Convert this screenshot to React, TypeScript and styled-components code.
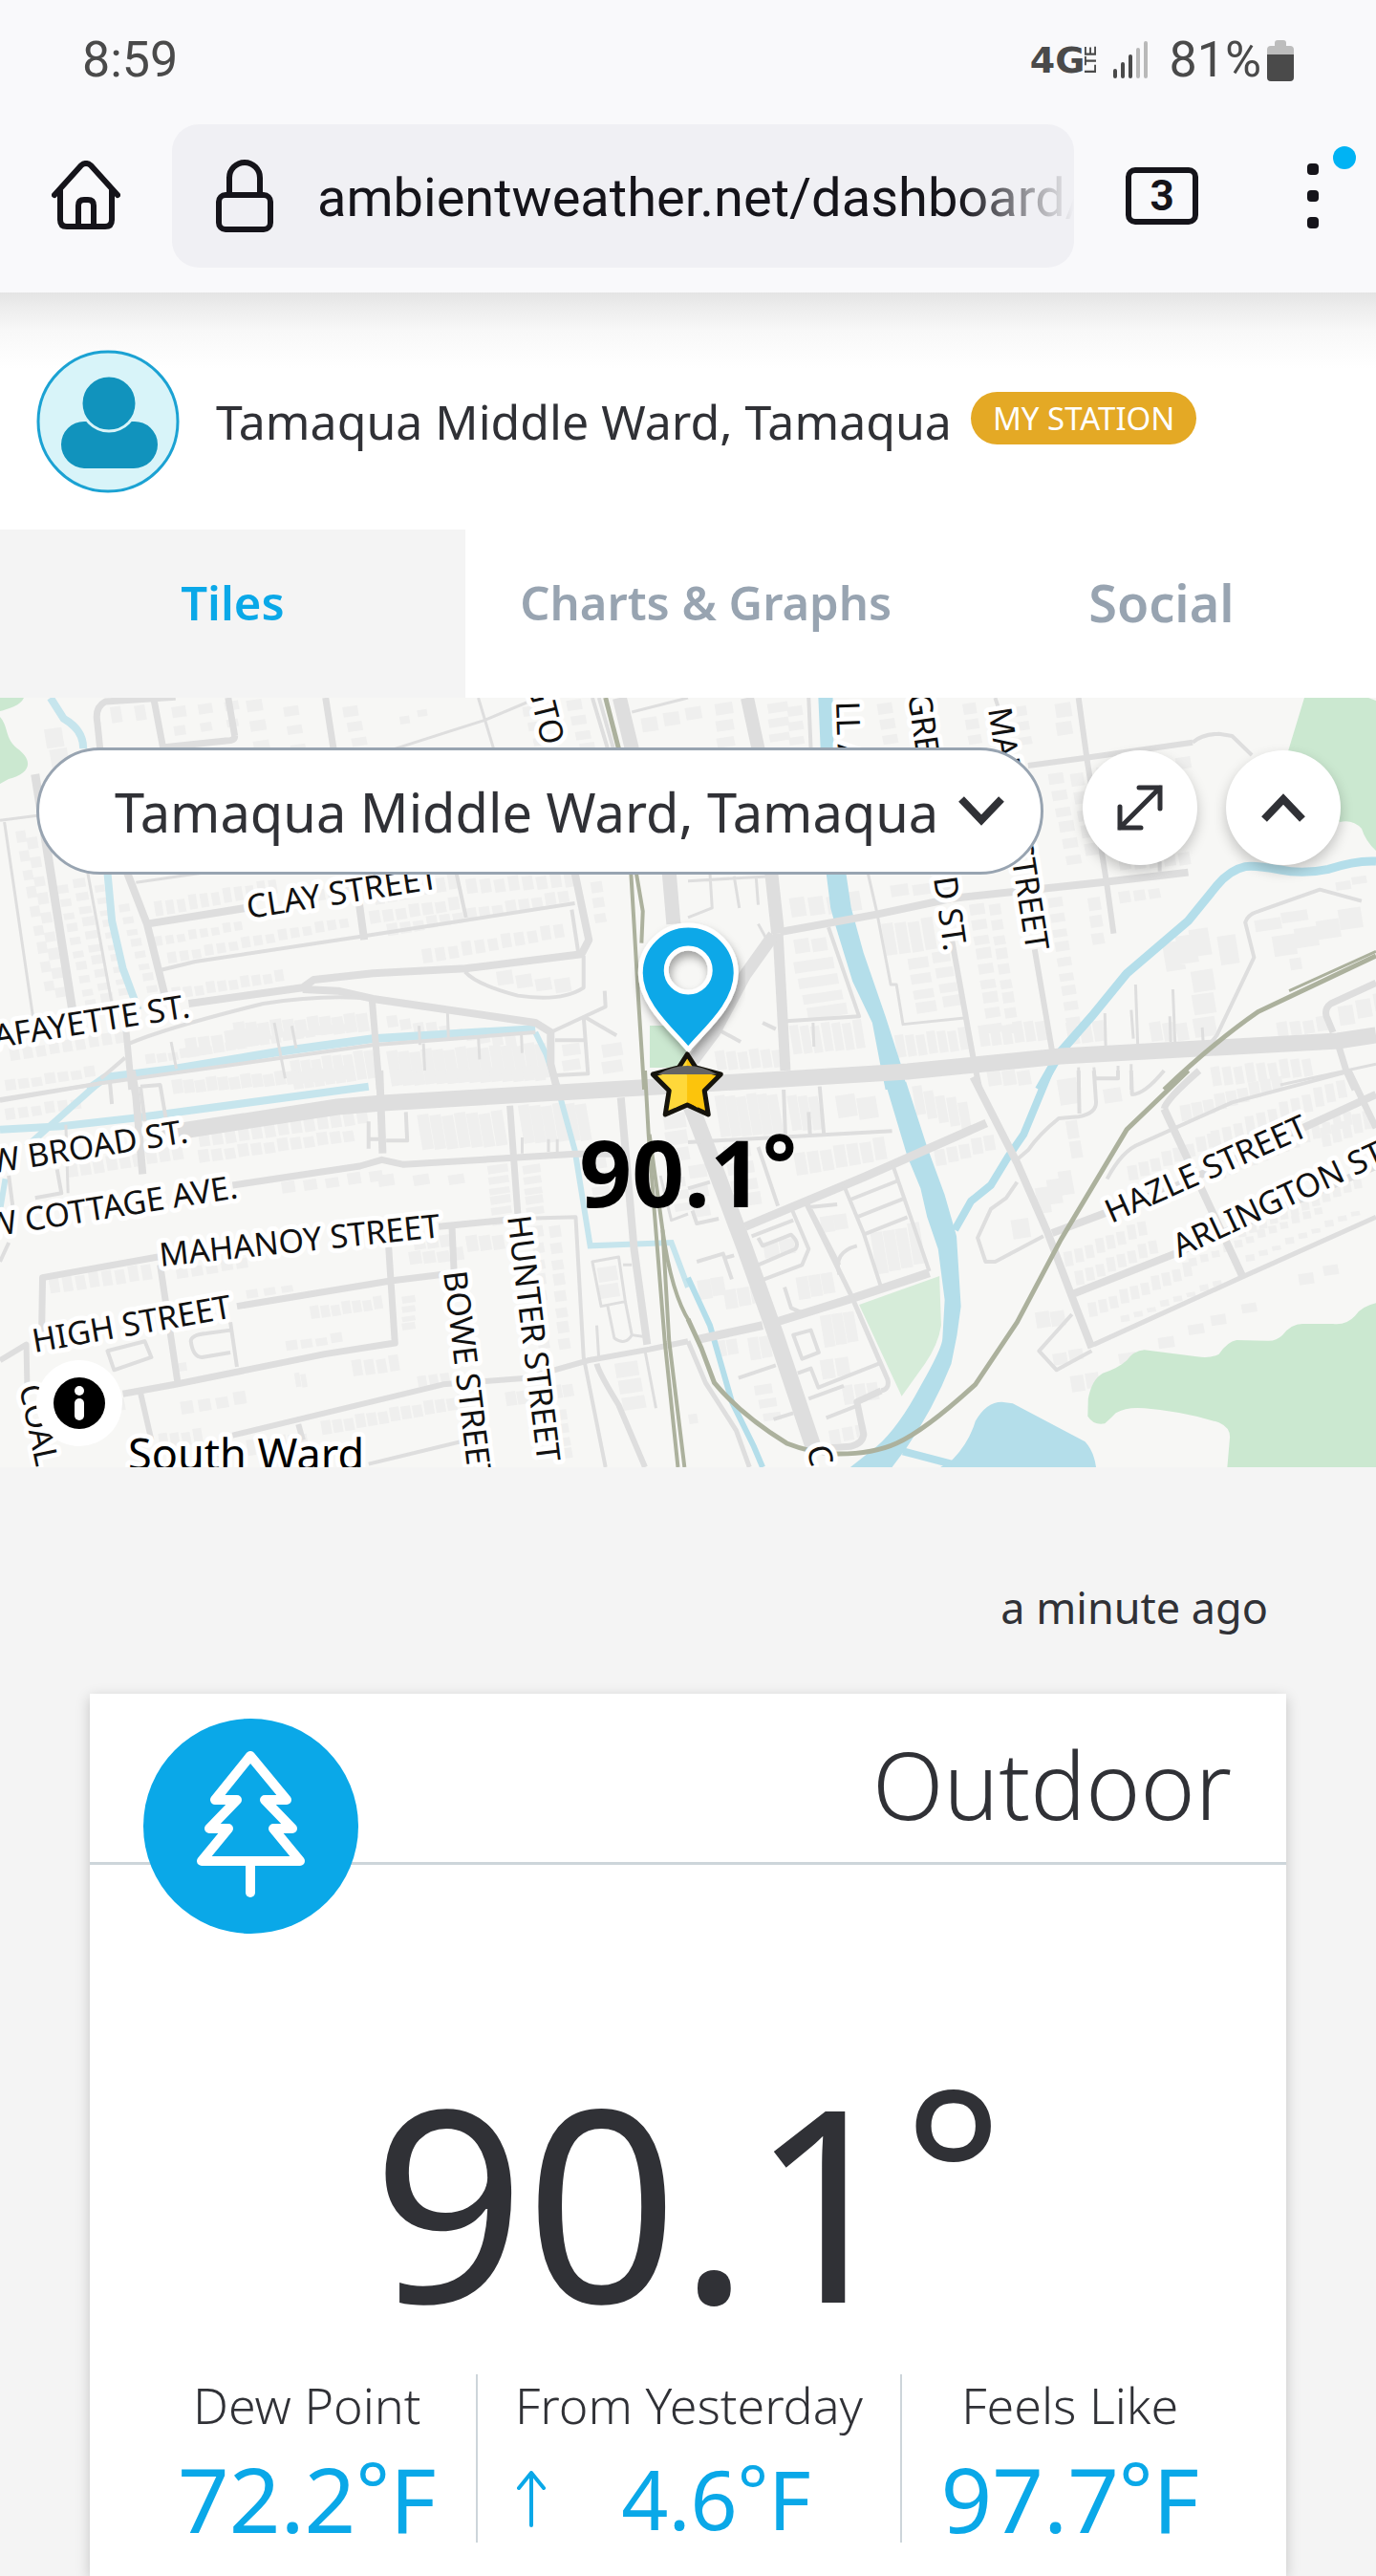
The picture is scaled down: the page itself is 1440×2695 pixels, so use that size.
import React, { useState } from "react";
import styled, { createGlobalStyle } from "styled-components";

const sans = `"Noto Sans", "Open Sans", sans-serif`;
const system = `Roboto, "Noto Sans", sans-serif`;

const color = {
  ink: "#303136",
  blue: "#0aa8e8",
  muted: "#98a4b1",
  page: "#f4f4f4",
  line: "#cdd5da",
  road: "#dedede",
  building: "#efefee",
  water: "#b4deea",
  stream: "#c6e5ed",
  wood: "#cbe8d0",
  rail: "#acb19d",
};

const GlobalStyle = createGlobalStyle`
  *, *::before, *::after { box-sizing: border-box; }
  body { margin: 0; background: ${color.page}; color: ${color.ink}; font-family: ${sans}; }
  button, input, select { font: inherit; color: inherit; margin: 0; }
  button { padding: 0; border: 0; background: none; cursor: pointer; }
  svg { display: block; }
`;

const Page = styled.div`
  min-height: 100vh;
  display: flex;
  flex-direction: column;
`;

/* ---------- phone and browser chrome ---------- */

const Chrome = styled.header`
  background: #f9f9fb;
  font-family: ${system};
  padding-bottom: 26px;
`;

const StatusBar = styled.div`
  display: flex;
  align-items: center;
  justify-content: space-between;
  height: 130px;
  padding: 0 86px;
  padding-bottom: 4px;
  color: #4a4a4a;
  font-size: 52px;
  line-height: 60px;
`;

const StatusIcons = styled.div`
  display: flex;
  align-items: center;
`;

const Network = styled.span`
  display: flex;
  align-items: center;
  margin-right: 16px;
  font: bold 38px/40px "DejaVu Sans", sans-serif;
`;

const Lte = styled.span`
  writing-mode: vertical-rl;
  transform: rotate(180deg);
  font: bold 16px/14px "Liberation Sans", sans-serif;
`;

const Percent = styled.span`
  margin: 0 6px 0 22px;
`;

const Toolbar = styled.div`
  display: grid;
  grid-template-columns: 72px 1fr 76px 72px;
  align-items: center;
  gap: 54px;
  padding: 0 60px 0 54px;
  color: #15141a;
`;

const AddressBar = styled.label`
  display: flex;
  align-items: center;
  gap: 46px;
  height: 150px;
  padding-left: 46px;
  border-radius: 28px;
  background: #f0f0f4;
  overflow: hidden;
`;

const AddressInput = styled.input`
  flex: 1;
  min-width: 0;
  padding: 4px 0 0;
  border: 0;
  outline: 0;
  background: none;
  font-size: 56px;
  line-height: 72px;
  mask-image: linear-gradient(to right, #000 calc(100% - 120px), transparent);
`;

const TabCount = styled.button`
  height: 60px;
  border: 6px solid #15141a;
  border-radius: 10px;
  font-size: 44px;
  font-weight: 700;
  line-height: 48px;
`;

const MenuButton = styled.button`
  position: relative;
  display: flex;
  justify-content: flex-end;
`;

const UpdateDot = styled.span`
  position: absolute;
  top: -18px;
  right: -39px;
  width: 24px;
  height: 24px;
  border-radius: 50%;
  background: #00b3f4;
`;

/* ---------- station heading and tabs ---------- */

const Station = styled.section`
  display: flex;
  align-items: center;
  padding: 60px 38px 38px;
  background: linear-gradient(#e4e4e4, #ededed 16px, #f8f8f8 40px, #fff 80px);
`;

const StationName = styled.h1`
  margin: 0 20px 0 38px;
  font-size: 50px;
  font-weight: 400;
  line-height: 64px;
  white-space: nowrap;
`;

const Badge = styled.span`
  margin-bottom: 8px;
  padding: 0 23px;
  border-radius: 28px;
  background: #e4a925;
  color: #fff;
  font-size: 33px;
  line-height: 55px;
  white-space: nowrap;
`;

const Tabs = styled.nav`
  display: grid;
  grid-template-columns: 338fr 350fr 312fr;
  background: #fff;
`;

const Tab = styled.button<{ $active?: boolean; $large?: boolean }>`
  height: 176px;
  padding-bottom: 24px;
  background: ${(p) => (p.$active ? color.page : "#fff")};
  color: ${(p) => (p.$active ? color.blue : color.muted)};
  font-size: ${(p) => (p.$large ? 54 : 49)}px;
  font-weight: 600;
`;

/* ---------- map ---------- */

const MapPanel = styled.section`
  position: relative;
  height: 805px;
  overflow: hidden;
  background: #f7f7f5;
`;

const MapArt = styled.svg`
  position: absolute;
  inset: 0;
  width: 100%;
  height: 100%;
  path, line { vector-effect: non-scaling-stroke; }
`;

const MapControls = styled.div`
  position: relative;
  display: flex;
  align-items: flex-start;
  padding: 52px 37px 0 38px;
`;

const StationPicker = styled.div`
  position: relative;
  flex: 1;
  margin-right: 41px;
`;

const PickerSelect = styled.select`
  appearance: none;
  display: block;
  width: 100%;
  height: 133px;
  padding: 0 40px 0 79px;
  border: 3px solid ${color.muted};
  border-radius: 67px;
  background: #fff;
  font-size: 56px;
`;

const PickerArrow = styled.svg`
  position: absolute;
  top: 50px;
  right: 41px;
  pointer-events: none;
`;

const RoundButton = styled.button`
  display: grid;
  place-items: center;
  width: 120px;
  height: 120px;
  margin: 3px 0 0 30px;
  border-radius: 50%;
  background: #fff;
  box-shadow: 0 6px 14px rgba(0, 0, 0, 0.22);
  &:first-of-type { margin-left: 0; }
`;

const Marker = styled.div`
  position: absolute;
  top: 225px;
  left: 50%;
  display: flex;
  flex-direction: column;
  align-items: center;
  transform: translateX(-50%);
`;

const MarkerValue = styled.span`
  margin-top: -4px;
  color: #000;
  font-size: 96px;
  font-weight: 700;
  line-height: 110px;
`;

const InfoButton = styled.button`
  position: absolute;
  left: 38px;
  bottom: 22px;
  display: grid;
  place-items: center;
  width: 90px;
  height: 90px;
  border-radius: 50%;
  background: #fff;
`;

/* ---------- outdoor tile ---------- */

const Updated = styled.p`
  margin: 0;
  padding: 117px 113px 60px;
  font-size: 45px;
  line-height: 60px;
  text-align: right;
`;

const Card = styled.article`
  position: relative;
  flex: 1;
  margin: 0 94px;
  padding-bottom: 35px;
  background: #fff;
  box-shadow: 0 4px 14px rgba(0, 0, 0, 0.2);
`;

const CardHeader = styled.div`
  padding: 21px 57px 8px;
  border-bottom: 3px solid ${color.line};
  text-align: right;
`;

const CardTitle = styled.h2`
  margin: 0;
  font-size: 97px;
  font-weight: 300;
  line-height: 147px;
`;

const CardIcon = styled.span`
  position: absolute;
  top: 26px;
  left: 56px;
  display: grid;
  place-items: center;
  width: 225px;
  height: 225px;
  border-radius: 50%;
  background: ${color.blue};
`;

const Degree = styled.span`
  font-size: 0.88em;
  line-height: 0;
  vertical-align: 0.18em;
`;

const Temperature = styled.p`
  margin: 210px 0 43px;
  font-size: 280px;
  line-height: 280px;
  text-align: center;
`;

const Stats = styled.dl`
  display: grid;
  grid-template-columns: 4fr 5fr 4fr;
  margin: 0 50px;
`;

const Stat = styled.div`
  text-align: center;
  & + & { border-left: 2px solid ${color.line}; }
`;

const StatLabel = styled.dt`
  font-size: 52px;
  font-weight: 300;
  line-height: 64px;
  white-space: nowrap;
`;

const StatValue = styled.dd<{ $small?: boolean }>`
  display: flex;
  align-items: center;
  justify-content: center;
  gap: 79px;
  margin: 20px 0 0;
  padding-right: ${(p) => (p.$small ? 52 : 0)}px;
  color: ${color.blue};
  font-size: ${(p) => (p.$small ? 86 : 94)}px;
  line-height: 92px;
`;

/* ---------- map data ---------- */

type Road = [width: number, d: string];
type Block = [x: number, y: number, dx: number, dy: number, count: number, w: number, h: number];
interface Sheet {
  transform: string;
  streams: Road[];
  roads: Road[];
  rails: Road[];
  blocks: Block[];
}

const sheets: Sheet[] = [
  {
    transform: "translate(0 720) scale(.4592 .3333)",
    streams: [
      [8, "M115 30L145 95Q190 130 190 190"],
      [8, "M245 580L255 730L280 880L315 1010"],
      [9, "M200 1260L240 1222L400 1195L640 1140L850 1100L1220 1070"],
      [6, "M1220 1080L1245 1150L1272 1260"],
    ],
    roads: [
      [7, "M228 190L222 110Q215 60 240 42L400 28M350 30L372 190M535 150Q535 165 515 165L375 185M520 30L535 150M742 30L760 190"],
      [3, "M1090 30L1125 190M900 190L1105 100L1200 45M1440 75L1568 30M10 420L75 1030M200 580L255 990M0 415L85 400M310 610L460 580"],
      [4, "M1350 30L1385 190M1365 30L1398 190"],
      [15, "M1412 30L1440 190L1525 580L1535 740"],
      [9, "M80 270L165 1010"],
      [8, "M290 580L335 740L375 960M335 740L560 690M815 640L830 790"],
      [4, "M365 885L445 858L830 778L1310 675M1040 580L1062 720M1060 890Q1085 930 1180 965Q1280 985 1330 940L1330 840M1303 695L1318 830"],
      [8, "M1310 580L1342 790L1325 835L1060 880L850 895L715 915L690 940L430 990M690 945L770 950L850 975L1220 1050L1255 1080L1255 1180L1270 1260"],
      [4, "M295 1115Q380 1065 600 990Q740 960 850 975M1255 1080L1380 1000L1378 950M1330 1030L1405 1090M1330 1030L1340 1210L1265 1215M1265 1105L1330 1105M230 1225L285 1160M0 1290L230 1240L850 1120L1220 1080"],
      [7, "M848 980L865 1260M285 1040L300 1260"],
      [3, "M625 1050L650 1225M665 1060L675 1130M955 1060L957 1120M965 1115L968 1200M1020 1020L1022 1100M390 1110L402 1195M1090 1090L1093 1165M1188 1080L1190 1145"],
    ],
    rails: [
      [5, "M1380 30L1410 190"],
      [4, "M1438 580L1445 740L1455 980L1468 1260M1450 580L1465 700L1462 800"],
    ],
    blocks: [
      [100, 130, 12, 60, 2, 40, 60], [250, 60, 55, -8, 2, 24, 50], [390, 60, 60, -12, 3, 32, 34], [395, 120, 60, -14, 3, 26, 30],
      [560, 40, 8, 60, 3, 36, 36], [645, 60, 8, 56, 3, 34, 30], [780, 60, 10, 45, 3, 34, 32], [910, 90, 40, -24, 2, 22, 24],
      [1190, 60, 12, 45, 3, 30, 30], [1290, 40, 10, 45, 4, 34, 32], [1460, 95, 50, -20, 3, 36, 44],
      [35, 450, 8, 58, 9, 22, 36], [60, 470, 8, 58, 9, 24, 36], [130, 620, 7, 40, 10, 24, 26], [165, 600, 7, 40, 10, 28, 28],
      [215, 620, 6, 36, 10, 22, 22], [270, 680, 9, 36, 9, 24, 24], [350, 670, 26, -7, 11, 18, 46], [350, 780, 26, -7, 8, 18, 30],
      [660, 640, 28, -7, 5, 22, 40], [850, 630, 28, -8, 7, 22, 50], [1060, 600, 32, -3, 8, 24, 46], [840, 700, 30, -7, 7, 24, 40],
      [380, 830, 28, -8, 15, 20, 34], [880, 740, 30, -8, 14, 24, 38], [960, 820, 30, -8, 11, 22, 44], [390, 940, 26, -6, 10, 20, 36],
      [1130, 890, 44, 8, 4, 36, 44], [420, 1100, 30, -8, 6, 26, 60], [530, 1050, 28, -3, 11, 26, 60], [880, 1030, 30, 7, 10, 24, 36],
      [330, 1150, 26, -6, 18, 22, 30], [660, 1170, 24, -5, 8, 22, 90], [880, 1140, 26, -2, 14, 25, 110], [20, 1130, 30, -7, 9, 22, 40],
      [1280, 1120, 0, 46, 2, 40, 36], [1370, 1120, 0, 50, 2, 46, 40], [1345, 610, 4, 46, 3, 26, 34],
    ],
  },
  {
    transform: "translate(720 720) scale(.4592 .3333)",
    streams: [],
    roads: [
      [14, "M135 30L160 190L190 580L205 770"],
      [11, "M205 770L222 1200"],
      [13, "M195 775L130 900L60 1080L0 1190"],
      [8, "M210 765L430 710L600 660L940 610L1140 578"],
      [6, "M775 243L900 220L1150 170M890 30L910 230L955 620L970 770M600 780L650 1160L665 1260M790 820L830 1140"],
      [4, "M1150 170Q1170 145 1210 143L1240 150L1285 210M1075 500L1075 575M320 750L390 1030L225 1045M275 30L280 190M700 30L712 80"],
      [3, "M410 580L430 700L462 930L475 930L490 1055L630 1035M285 1050L287 1125M160 740L180 790M0 720L55 690L50 580M105 590L117 690M155 590L160 680M0 605L190 590"],
      [4, "M1535 668L1440 632L1300 700Q1275 710 1270 735L1290 845L1205 1090L1170 1150M60 1065L120 1110M170 1050L200 1070"],
      [7, "M1568 925L1465 990Q1450 1005 1455 1030L1470 1080M1480 1110L1500 1200L1520 1260"],
      [3, "M1020 930L1025 1120M1105 945L1110 1115M950 1020L952 1130M1172 1065L1174 1110M1568 1180L1350 1245M1010 1010L1015 1100M1098 1030L1100 1110M890 1190L892 1260M925 1190L928 1225L980 1225L980 1185M1010 1180L1010 1260"],
    ],
    rails: [[5, "M1568 840L1300 1015Q1200 1110 1085 1260"], [3, "M1568 826L1370 950"]],
    blocks: [
      [60, 50, 2, 50, 3, 40, 36], [180, 50, 2, 44, 3, 46, 30], [225, 60, 2, 44, 3, 34, 30], [430, 50, 6, 46, 3, 34, 34],
      [625, 50, 6, 46, 3, 30, 34], [740, 60, 6, 44, 3, 30, 30], [835, 50, 2, 55, 2, 36, 44], [820, 270, 8, 50, 6, 34, 34],
      [870, 270, 8, 54, 5, 30, 40], [930, 250, 60, -10, 4, 34, 36], [980, 530, 34, -4, 5, 26, 42], [980, 640, 34, -8, 3, 26, 36],
      [230, 660, 42, -6, 4, 34, 60], [440, 740, 30, -6, 4, 26, 100], [460, 620, 50, -5, 3, 40, 36], [640, 680, 5, 46, 9, 34, 34],
      [685, 680, 5, 46, 9, 26, 34], [820, 660, 5, 46, 9, 32, 30], [910, 660, 4, 52, 3, 28, 40], [500, 850, 6, 46, 4, 46, 34],
      [555, 830, 8, 46, 4, 40, 34], [240, 790, 40, -6, 2, 34, 44], [240, 860, 10, 48, 4, 90, 36], [60, 1140, 26, -2, 6, 22, 60],
      [230, 1060, 24, -3, 7, 20, 90], [470, 1090, 24, -4, 7, 20, 70], [660, 1060, 26, -4, 6, 22, 66], [860, 1050, 30, -6, 3, 26, 70],
      [1080, 800, 30, -24, 3, 44, 90], [1205, 780, 0, 0, 1, 42, 90], [1145, 890, 2, 70, 3, 50, 66], [1050, 1050, 30, -2, 3, 26, 60],
      [1290, 730, 60, -28, 2, 60, 36], [1330, 780, 50, -28, 4, 52, 64], [1475, 610, 36, -20, 2, 34, 26], [1370, 850, 0, 0, 1, 26, 36],
      [1340, 1050, 30, -6, 4, 24, 46], [1480, 1000, 40, -24, 3, 34, 60], [1190, 1190, 26, -4, 9, 20, 60], [680, 1200, 34, -2, 3, 30, 50],
    ],
  },
  {
    transform: "translate(0 1120) scale(.4592 .3333)",
    streams: [
      [8, "M0 185L140 175L300 150L840 50"],
      [7, "M60 240L240 20"],
      [6, "M1268 40L1310 250L1345 550L1530 540L1568 680"],
      [6, "M12 340L0 440"],
    ],
    roads: [
      [4, "M0 95L230 40M320 50L365 45L378 150M320 50L330 160M840 160L840 245M840 215L865 215M925 130L928 220L880 220M250 30L255 105M80 400L140 385L130 310M20 330L35 490M0 600L20 540"],
      [8, "M300 0L310 80L325 325M865 0L872 260M1415 85L1445 560L1475 860"],
      [7, "M530 360L820 300L870 280L920 295L1310 262L1400 262M1162 110L1180 450M1030 490L1035 640"],
      [7, "M95 820L97 650L360 585M1000 490L1180 465M365 610L405 980M540 740L890 660L1010 640M885 540L900 855L740 890L400 985L280 1015"],
      [4, "M1180 465L1312 460L1330 900L1380 1245M245 880L330 850L345 900L260 940ZM525 815L470 825Q435 830 435 850Q440 900 460 900L525 885M525 790L540 930M840 1235L1050 1165"],
      [6, "M0 910L60 860L62 1000M320 1010L345 1160M530 1145L1010 985L1200 965L1340 910L1480 875L1568 850M680 1110L690 1160M1360 920Q1365 950 1410 1050L1470 1245"],
      [3, "M1350 600L1410 585L1425 725L1370 740ZM1385 740L1400 840Q1425 865 1440 830L1425 725M1360 800L1365 910M1470 880L1495 1060M1420 610L1440 610M1440 830L1465 835M1190 210L1190 260M1250 215L1250 255M1270 215L1270 255M150 170L155 385"],
      [3, "M1505 330L1530 470L1568 450"],
    ],
    rails: [
      [4, "M1470 0L1478 200L1490 420L1515 850L1545 1245"],
      [4, "M1480 200L1510 500L1525 850L1560 1245"],
      [4, "M1510 500Q1530 700 1572 790"],
    ],
    blocks: [
      [10, 30, 30, -7, 7, 24, 34], [10, 120, 30, -7, 6, 22, 36], [390, 30, 26, -3, 16, 24, 44], [450, 190, 30, -6, 13, 24, 50],
      [450, 250, 30, -6, 12, 24, 40], [890, 0, 25, -1, 14, 24, 46], [950, 140, 28, -2, 7, 26, 110], [1180, 110, 26, -2, 6, 25, 120],
      [150, 290, 30, -7, 9, 24, 46], [640, 350, 50, -9, 5, 30, 36], [860, 330, 80, -4, 3, 36, 36], [1110, 300, 2, 32, 6, 46, 26],
      [1190, 300, 2, 32, 5, 40, 26], [1340, 280, 4, 40, 4, 40, 32], [110, 650, 30, -6, 8, 22, 50], [400, 620, 34, -8, 5, 26, 34],
      [560, 690, 40, -10, 3, 26, 26], [705, 740, 24, -5, 7, 20, 40], [915, 710, 0, 28, 4, 30, 22], [940, 520, 30, -5, 3, 26, 44],
      [930, 570, 32, -4, 4, 28, 40], [1060, 520, 30, -4, 3, 26, 50], [1210, 490, 2, 50, 8, 26, 34], [1250, 490, 3, 50, 8, 26, 36],
      [1360, 620, 4, 50, 2, 44, 46], [650, 850, 34, -8, 4, 26, 30], [140, 1060, 30, -8, 5, 22, 40], [410, 1040, 40, -10, 4, 28, 40],
      [670, 950, 14, 0, 2, 12, 44], [800, 910, 28, -5, 4, 22, 50], [950, 960, 26, -8, 3, 20, 34], [360, 1140, 26, -5, 4, 20, 46],
      [730, 1100, 26, -7, 13, 22, 44], [1150, 1010, 26, -6, 6, 24, 44], [1250, 1070, 4, 40, 4, 40, 32], [1400, 920, 8, 50, 3, 52, 46],
      [560, 1160, 24, -5, 6, 18, 50], [400, 920, 0, 0, 1, 24, 26], [1510, 140, 4, 50, 3, 50, 46], [1520, 340, 8, 36, 3, 40, 30],
    ],
  },
  {
    transform: "translate(720 1120) scale(.4592 .3333)",
    streams: [],
    roads: [
      [17, "M-10 60L15 140L65 320L130 560L200 830L290 1200"],
      [9, "M130 490L400 335L680 165M200 790L375 715L550 635M20 845L170 800"],
      [8, "M650 20L750 290L820 510L875 710L920 870M830 510L1100 370L1568 75M880 700L1110 575L1568 300M1085 120L1265 650"],
      [7, "M1085 120Q1090 90 1165 0M1505 0L1568 180"],
      [5, "M925 860L1260 650L1568 460M265 405L370 700L455 970Q460 1000 440 1005M0 850L40 980L110 1130L140 1245"],
      [7, "M440 1005L385 1040L400 1140Q400 1170 370 1180L310 1185"],
      [4, "M955 340Q990 250 1030 230L1240 100L1500 5M875 765L800 880L840 940L920 880M745 285L775 250Q800 200 845 150L890 145Q930 135 930 100L925 0M890 0L892 135M1010 0L1012 75Q1040 75 1085 0M980 0L980 25L930 25"],
      [4, "M750 350L725 400L690 435L660 525L678 600L700 600L810 520M300 50L310 205M218 60L222 205M0 225L465 190M465 290L550 630M355 360L400 510L440 680M370 405L480 345M385 460L495 400M400 515L500 460M160 240L205 425M275 130L278 200"],
      [4, "M235 430L275 560L260 610L165 660M145 520L240 470M160 525L170 550L235 515Q255 540 245 560L160 610M240 830L280 815L298 885L260 905ZM250 950L280 935L297 995L435 920M115 965L200 925M275 1030L355 990M315 1090L390 1050M270 410L345 610M345 640Q330 570 385 550M20 600L80 575L100 655M80 590L105 580M220 680L235 745L260 760M0 370L50 350M10 440L20 480L70 465M195 1095L240 1075M270 430L340 420"],
    ],
    rails: [[5, "M0 780L30 870L60 980Q120 1080 225 1170Q280 1200 335 1203Q420 1205 475 1170Q540 1130 655 985L750 790L850 530L1000 185L1140 0"]],
    blocks: [
      [60, 80, 24, -2, 6, 23, 130], [225, 80, 24, -2, 3, 22, 110], [335, 80, 48, 4, 2, 44, 70], [510, 50, 26, 12, 5, 22, 90],
      [560, 250, 28, -12, 5, 24, 50], [240, 260, 30, -8, 7, 26, 70], [80, 240, 8, 50, 4, 60, 40], [840, 30, 0, 0, 1, 44, 80],
      [945, 60, 0, 0, 1, 40, 44], [860, 160, 8, 60, 2, 26, 56], [790, 370, 26, -30, 3, 30, 80], [735, 470, 0, 0, 1, 40, 60],
      [170, 540, 36, -12, 2, 34, 50], [300, 460, 30, -10, 2, 30, 50], [415, 510, 28, -10, 4, 27, 130], [300, 770, 26, -9, 3, 25, 100],
      [245, 650, 28, -10, 3, 27, 70], [20, 660, 30, -12, 2, 30, 60], [80, 690, 30, -10, 3, 28, 60], [60, 850, 26, -8, 2, 24, 50],
      [135, 840, 26, -8, 2, 24, 70], [300, 910, 34, -10, 2, 30, 60], [150, 990, 10, 40, 3, 40, 30], [350, 990, 28, -8, 3, 24, 60],
      [320, 1130, 30, -12, 3, 24, 44], [855, 570, 24, -14, 8, 19, 46], [880, 630, 24, -14, 8, 19, 44], [910, 730, 24, -14, 10, 19, 44],
      [1140, 590, 26, -15, 12, 18, 26], [985, 770, 30, -16, 8, 20, 20], [1000, 300, 26, -15, 8, 22, 46], [1120, 110, 26, -12, 9, 24, 50],
      [1190, 190, 26, -15, 12, 20, 60], [1180, 310, 24, -14, 14, 18, 44], [1250, 480, 24, -14, 12, 18, 44], [1270, 580, 30, -18, 9, 20, 20],
      [1390, 640, 56, -30, 2, 34, 34], [1190, 770, 70, -40, 2, 34, 32], [1070, 840, 68, -44, 2, 36, 34], [830, 890, 36, -16, 2, 32, 36],
      [980, 890, 0, 0, 1, 40, 32], [870, 960, 34, -12, 2, 30, 50], [790, 760, 34, -6, 2, 32, 50], [1440, 180, 24, -14, 5, 20, 60],
      [0, 1080, 10, 0, 1, 20, 30], [0, 300, 4, 60, 3, 40, 40],
    ],
  },
];

interface StreetLabel {
  text: string;
  x: number;
  y: number;
  angle: number;
  anchor?: "start" | "end";
}

const streetLabels: StreetLabel[] = [
  { text: "CLAY STREET", x: 260, y: 961, angle: -9 },
  { text: "LAFAYETTE ST.", x: 200, y: 1064, angle: -9, anchor: "end" },
  { text: "W BROAD ST.", x: 198, y: 1195, angle: -9, anchor: "end" },
  { text: "W COTTAGE AVE.", x: 250, y: 1253, angle: -9, anchor: "end" },
  { text: "MAHANOY STREET", x: 168, y: 1325, angle: -6 },
  { text: "HIGH STREET", x: 36, y: 1415, angle: -10 },
  { text: "BOWE STREET", x: 464, y: 1331, angle: 83 },
  { text: "HUNTER STREET", x: 531, y: 1273, angle: 83 },
  { text: "COAL", x: 20, y: 1451, angle: 78 },
  { text: "GTO", x: 568, y: 781, angle: 76, anchor: "end" },
  { text: "LL AVE.", x: 875, y: 734, angle: 88 },
  { text: "GREENWOOD ST.", x: 988, y: 996, angle: 82, anchor: "end" },
  { text: "MARKET STREET", x: 1034, y: 742, angle: 81 },
  { text: "C", x: 844, y: 1515, angle: 76 },
  { text: "HAZLE STREET", x: 1163, y: 1280, angle: -24 },
  { text: "ARLINGTON STREET", x: 1234, y: 1316, angle: -25 },
];

const blockPath = ([x, y, dx, dy, count, w, h]: Block) =>
  Array.from({ length: count }, (_, i) => {
    const jitter = (i * 7) % 3;
    return `M${x + dx * i} ${y + dy * i + jitter * 4}l${w} ${-w * 0.2}l${h * 0.12} ${h - jitter * 3}l${-w} ${w * 0.2}Z`;
  }).join("");

const StreetMap = () => (
  <MapArt viewBox="0 730 1440 805" preserveAspectRatio="xMidYMid slice" aria-hidden="true">
    <rect y="730" width="1440" height="805" fill="#f7f7f5" />
    {sheets.map((s) => (
      <g key={s.transform} transform={s.transform}>
        <path d={s.blocks.map(blockPath).join("")} fill={color.building} />
      </g>
    ))}
    <g fill={color.wood}>
      <path d="M0 730H25C22 738 8 742 0 744ZM0 750C9 760 5 773 18 783C37 797 30 810 9 815L0 820Z" />
      <path d="M1365 730H1432L1440 733V890Q1429 880 1425 867Q1416 857 1402 860L1348 786Z" />
      <path d="M680 1073H720V1117H680Z" />
      <g transform={sheets[3].transform}>
        <path d="M1568 730Q1535 740 1520 770Q1500 800 1470 795L1400 795Q1375 795 1355 830Q1340 850 1320 848L1250 846Q1230 850 1210 890Q1190 905 1160 898L1040 877Q1015 880 1000 910Q980 935 945 950Q920 970 912 1030L911 1085Q925 1115 950 1108Q965 1090 975 1075Q1000 1055 1040 1060Q1130 1070 1210 1105Q1235 1120 1235 1150L1229 1245L1568 1245Z" />
        <path d="M390 735L573 645L577 800Q570 860 540 920L487 1022Z" fill="#d6ecd9" />
      </g>
    </g>
    {sheets.map((s) => (
      <g key={s.transform} transform={s.transform} fill="none" stroke={color.stream}>
        {s.streams.map(([w, d]) => <path key={d} d={d} strokeWidth={w} />)}
      </g>
    ))}
    <g transform={sheets[1].transform} fill={color.water}>
      <path d="M297 30L330 30L332 190L360 580L372 690L400 830L450 1030L485 1180L500 1260L450 1260L438 1180L420 1050L375 920L335 740L325 690L315 580L302 190Z" />
      <path d="M1568 543Q1520 540 1460 568Q1400 585 1350 570Q1290 555 1270 560Q1235 570 1205 620L1140 730L1000 895L920 1030L850 1140L800 1260" fill="none" stroke={color.water} strokeWidth="9" />
    </g>
    <g transform={sheets[3].transform} fill={color.water}>
      <path d="M450 40L497 35L545 240L585 390L612 520L622 740Q615 830 600 920Q560 1060 495 1190L465 1245L370 1245L430 1180Q480 1120 530 990Q580 870 580 840L585 720L570 560L545 460L530 370L500 270Z" />
      <path d="M600 1225Q640 1170 655 1100Q680 1040 715 1040L740 1045L905 1165Q925 1195 930 1245L575 1245Z" />
      <path d="M825 0L765 200L730 270L690 360L645 410L608 500M490 1195L600 1235" fill="none" stroke={color.water} strokeWidth="8" />
      <path d="M0 650L50 800L100 1040L150 1180L170 1245" fill="none" stroke={color.water} strokeWidth="6" />
    </g>
    {sheets.map((s) => (
      <g key={s.transform} transform={s.transform} fill="none" stroke={color.road} strokeLinejoin="round">
        {s.roads.map(([w, d]) => <path key={d} d={d} strokeWidth={w} />)}
      </g>
    ))}
    <path d="M170 1187L197 1182L353 1158L400 1154L670 1138L720 1135L950 1121L1110 1105L1400 1089L1440 1083" fill="none" stroke={color.road} strokeWidth="17" />
    {sheets.map((s) => (
      <g key={s.transform} transform={s.transform} fill="none" stroke={color.rail}>
        {s.rails.map(([w, d]) => <path key={d} d={d} strokeWidth={w} />)}
      </g>
    ))}
    <g fontFamily={sans} fontSize="34" fill="#111" stroke="#fff" strokeWidth="10" strokeLinejoin="round" paintOrder="stroke">
      {streetLabels.map((l) => (
        <text key={l.text} textAnchor={l.anchor} transform={`translate(${l.x} ${l.y}) rotate(${l.angle})`}>
          {l.text}
        </text>
      ))}
      <text x="134" y="1538" fontSize="45" fill="#000">South Ward</text>
    </g>
  </MapArt>
);

/* ---------- icons ---------- */

const HomeIcon = () => (
  <svg width="72" height="74" viewBox="0 0 72 74" fill="none" stroke="currentColor" strokeWidth="6" strokeLinecap="round" strokeLinejoin="round">
    <path d="M3 36L31 5Q36 1 41 5L69 36" />
    <path d="M9 31V62Q9 69 16 69H56Q63 69 63 62V31" />
    <path d="M28 68V47Q28 41 34 41H38Q44 41 44 47V68" />
  </svg>
);

const LockIcon = () => (
  <svg width="60" height="76" viewBox="0 0 60 76" fill="none" stroke="currentColor" strokeWidth="6">
    <rect x="3" y="37" width="54" height="36" rx="7" />
    <path d="M14 37V19A16 16 0 0 1 46 19V37" />
  </svg>
);

const SignalIcon = () => (
  <svg width="36" height="40" viewBox="0 0 36 40" strokeWidth="4" strokeLinecap="round" stroke="#4a4a4a">
    <path d="M2 31V37M10 24V37M18 16V37" />
    <path d="M26 9V37M34 2V37" stroke="#b9b9b9" />
  </svg>
);

const BatteryIcon = () => (
  <svg width="28" height="43" viewBox="0 0 28 43">
    <path d="M8 6V3Q8 0 11 0H17Q20 0 20 3V6H24Q28 6 28 10V20H0V10Q0 6 4 6Z" fill="#bdbdbd" />
    <path d="M0 15H28V39Q28 43 24 43H4Q0 43 0 39Z" fill="#4a4a4a" />
  </svg>
);

const DotsIcon = () => (
  <svg width="12" height="68" viewBox="0 0 12 68" fill="currentColor">
    <rect width="12" height="12" rx="4" />
    <rect y="28" width="12" height="12" rx="4" />
    <rect y="56" width="12" height="12" rx="4" />
  </svg>
);

const Avatar = () => (
  <svg width="150" height="150" viewBox="0 0 150 150" role="img" aria-label="User">
    <circle cx="75" cy="75" r="73" fill="#d8f4f9" stroke="#1ba2d3" strokeWidth="3" />
    <path d="M50 75H102A24 24 0 0 1 127 99A25 25 0 0 1 102 124H50A25 25 0 0 1 26 99A24 24 0 0 1 50 75Z" fill="#1193bd" />
    <ellipse cx="76" cy="56" rx="29" ry="29" fill="#1193bd" stroke="#d8f4f9" strokeWidth="3" />
  </svg>
);

const ExpandIcon = () => (
  <svg width="48" height="48" viewBox="0 0 48 48" fill="none" stroke="currentColor" strokeWidth="5" strokeLinecap="round">
    <path d="M3 45L45 3M23 3H45V25M3 23V45H25" />
  </svg>
);

const PinIcon = () => (
  <svg width="120" height="220" viewBox="0 0 120 220">
    <defs>
      <filter id="pin-shadow" x="-20%" y="-20%" width="150%" height="140%">
        <feDropShadow dx="2" dy="6" stdDeviation="5" floodOpacity="0.35" />
      </filter>
      <linearGradient id="star-fill" x2="1">
        <stop offset=".49" stopColor="#ffd83a" />
        <stop offset=".51" stopColor="#fcc40c" />
      </linearGradient>
    </defs>
    <path
      d="M60 143C46 125 10 97 10 63A50 50 0 0 1 110 63C110 97 74 125 60 143ZM60 37A23 23 0 0 0 60 83A23 23 0 0 0 60 37Z"
      fill={color.blue}
      fillRule="evenodd"
      stroke="#fff"
      strokeWidth="5"
      strokeLinejoin="round"
      filter="url(#pin-shadow)"
    />
    <g strokeLinejoin="round">
      <path
        d="M59 148L68 162L94 169L77 186L81 211L59 201L36 211L40 186L23 169L50 162Z"
        fill="url(#star-fill)"
        stroke="#15130c"
        strokeWidth="5"
      />
      <path d="M44 178L58 170L74 178L70 204L59 197L46 204Z" fill="url(#star-fill)" />
      <path d="M28 169Q59 151 90 169Z" fill="#646464" />
    </g>
  </svg>
);

const InfoIcon = () => (
  <svg width="54" height="54" viewBox="0 0 54 54">
    <circle cx="27" cy="27" r="27" />
    <circle cx="27" cy="14" r="5" fill="#fff" />
    <rect x="22" y="22" width="10" height="23" rx="5" fill="#fff" />
  </svg>
);

const TreeIcon = () => (
  <svg width="114" height="160" viewBox="0 0 114 160" fill="none" stroke="#fff" strokeWidth="10" strokeLinejoin="round" strokeLinecap="round">
    <path d="M56 6L19 52H42L13 82H33L5 116H108L80 82H100L71 52H94Z" />
    <path d="M56 116V149" />
  </svg>
);

const UpArrow = () => (
  <svg width="30" height="60" viewBox="0 0 30 60" fill="none" stroke="currentColor" strokeWidth="4" strokeLinecap="round" strokeLinejoin="round">
    <path d="M15 58V3M2 19L15 3L28 19" />
  </svg>
);

const stations = ["Tamaqua Middle Ward, Tamaqua"];
const tabNames = ["Tiles", "Charts & Graphs", "Social"];

const Reading = ({ value, unit }: { value: string; unit?: string }) => (
  <span>{value}<Degree>°</Degree>{unit}</span>
);

export default function App() {
  const [tab, setTab] = useState("Tiles");

  return (
    <Page>
      <GlobalStyle />
      <Chrome>
        <StatusBar>
          <span>8:59</span>
          <StatusIcons>
            <Network>4G<Lte>LTE</Lte></Network>
            <SignalIcon />
            <Percent>81%</Percent>
            <BatteryIcon />
          </StatusIcons>
        </StatusBar>
        <Toolbar>
          <button aria-label="Home"><HomeIcon /></button>
          <AddressBar>
            <LockIcon />
            <AddressInput aria-label="Address" readOnly value="ambientweather.net/dashboard/" />
          </AddressBar>
          <TabCount aria-label="Open tabs">3</TabCount>
          <MenuButton aria-label="Menu"><DotsIcon /><UpdateDot /></MenuButton>
        </Toolbar>
      </Chrome>

      <Station>
        <Avatar />
        <StationName>Tamaqua Middle Ward, Tamaqua</StationName>
        <Badge>MY STATION</Badge>
      </Station>
      <Tabs>
        {tabNames.map((name) => (
          <Tab key={name} $active={name === tab} $large={name === "Social"} onClick={() => setTab(name)}>
            {name}
          </Tab>
        ))}
      </Tabs>

      <MapPanel>
        <StreetMap />
        <Marker>
          <PinIcon />
          <MarkerValue><Reading value="90.1" /></MarkerValue>
        </Marker>
        <MapControls>
          <StationPicker>
            <PickerSelect aria-label="Station">
              {stations.map((s) => <option key={s}>{s}</option>)}
            </PickerSelect>
            <PickerArrow width="48" height="32" viewBox="0 0 48 32" fill="none" stroke={color.ink} strokeWidth="8">
              <path d="M3 4L24 26L45 4" />
            </PickerArrow>
          </StationPicker>
          <RoundButton aria-label="Expand map"><ExpandIcon /></RoundButton>
          <RoundButton aria-label="Collapse map">
            <svg width="46" height="30" viewBox="0 0 46 30" fill="none" stroke="currentColor" strokeWidth="8">
              <path d="M3 27L23 6L43 27" />
            </svg>
          </RoundButton>
        </MapControls>
        <InfoButton aria-label="Map information"><InfoIcon /></InfoButton>
      </MapPanel>

      <Updated>a minute ago</Updated>
      <Card>
        <CardHeader><CardTitle>Outdoor</CardTitle></CardHeader>
        <CardIcon><TreeIcon /></CardIcon>
        <Temperature><Reading value="90.1" /></Temperature>
        <Stats>
          <Stat>
            <StatLabel>Dew Point</StatLabel>
            <StatValue><Reading value="72.2" unit="F" /></StatValue>
          </Stat>
          <Stat>
            <StatLabel>From Yesterday</StatLabel>
            <StatValue $small><UpArrow /><Reading value="4.6" unit="F" /></StatValue>
          </Stat>
          <Stat>
            <StatLabel>Feels Like</StatLabel>
            <StatValue><Reading value="97.7" unit="F" /></StatValue>
          </Stat>
        </Stats>
      </Card>
    </Page>
  );
}
